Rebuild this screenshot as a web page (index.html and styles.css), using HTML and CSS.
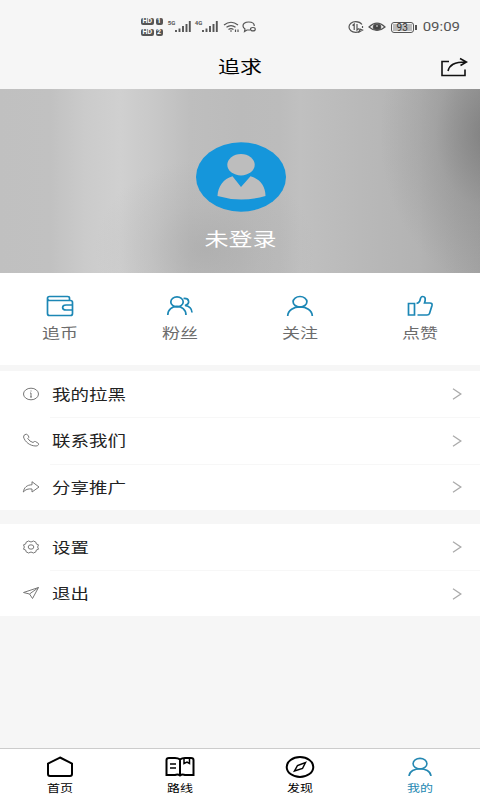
FILE: index.html
```html
<!DOCTYPE html>
<html lang="zh-CN">
<head>
<meta charset="utf-8">
<title>追求</title>
<link rel="stylesheet" href="styles.css">
</head>
<body>
<div class="status">
  <div class="hd"><div><b>HD</b><b>1</b></div><div><b>HD</b><b>2</b></div></div>
  <div class="sig"><i>5G</i><svg width="16" height="12" viewBox="0 0 16 12"><path d="M1 9v2M4.500 7.500v3.500M8 5v6M11.500 3v8M14.800 0v11"/></svg></div>
  <div class="sig second"><i>4G</i><svg width="16" height="12" viewBox="0 0 16 12"><path d="M1 9v2M4.500 7.500v3.500M8 5v6M11.500 3v8M14.800 0v11"/></svg></div>
  <svg class="wifi" width="18" height="12" viewBox="0 0 18 12"><path d="M1 4Q8 -1.500 15 4M3.500 6.300Q8 2.800 12.500 6.300M5.500 8.500Q8 6.800 10.500 8.500"/><path d="M7 10h2M12.500 8.500v2.500M15 8.500v2.500"/></svg>
  <svg class="bubble" width="16" height="12" viewBox="0 0 16 12"><path d="M8 9H5L2.500 10.500 3 8Q1 6.500 1 5C1 2.500 3.500 1 6.700 1s5.600 1.500 5.600 4"/><path d="M8.500 8.200c0-1.200 1.200-1.700 2.400-1.700s2.400.6 2.400 1.700-1.200 1.700-2.400 1.700-2.400-.6-2.400-1.700"/></svg>
  <svg class="sync" width="16" height="12" viewBox="0 0 16 12"><path d="M14 3.500C12.500 1.500 10.500.7 7.700.7 3.800.7 1 3 1 6s2.800 5.300 6.500 5.300c1.500 0 2.800-.2 4-.8M14.500 5v2"/><path d="M6.200 9V3L4.500 4.500M9 3v6l2-1.500M11 11l1-3 2.500 1z"/></svg>
  <svg class="eye" width="18" height="12" viewBox="0 0 18 12"><path d="M1 6Q9-2 17 6 9 13 1 6z"/><ellipse cx="9" cy="6" rx="3.700" ry="3" fill="#444"/><path d="M8 5h2" stroke="#ddd"/></svg>
  <div class="battery"><span>93</span></div>
  <div class="time"><span>09:09</span></div>
</div>
<header class="header">
  <h1 class="sq">追求</h1>
  <svg class="share" width="28" height="20" viewBox="0 0 28 20"><path d="M9 4.500H2V18.500H25V12.500M8 14C9.500 8 14 5 26 5M20 1.500 26.500 5 20.500 8.500"/></svg>
</header>
<section class="hero">
  <svg width="90" height="70" viewBox="0 0 90 70"><ellipse cx="45" cy="35" rx="45" ry="34.700" fill="#1596db"/><g fill="#bdbdbd"><ellipse cx="45" cy="22.800" rx="13.700" ry="10.700"/><path d="M36.500 34.200 45 45 54.500 34.200C64 37 69.500 44 69.500 54Q45 61 21.500 54C22 44 27.500 37 36.500 34.200z"/></g></svg>
  <div class="name sq">未登录</div>
</section>
<section class="stats">
  <div><svg width="28" height="22" viewBox="0 0 28 22"><path d="M23.500 5.500V3Q23.500 1.500 21.500 1.500H3.500Q1.500 1.500 1.500 3.500T3.500 5.500H24.500Q26.500 5.500 26.500 7.500V18.500Q26.500 20.500 24.500 20.500H3.500Q1.500 20.500 1.500 18.500V3.500M26.500 10H20C15.500 10 15.500 15 20 15H26.500"/></svg><span class="sq">追币</span></div>
  <div><svg width="28" height="22" viewBox="0 0 28 22"><ellipse cx="11" cy="6.900" rx="6.200" ry="5"/><path d="M1.800 20C1.800 8.500 20 8.500 20 20M17.500 3.500C23.500 3 24.500 8.500 19 10.500 23 11 25.800 13.500 26 17.500"/></svg><span class="sq">粉丝</span></div>
  <div><svg width="28" height="22" viewBox="0 0 28 22"><ellipse cx="14" cy="6.800" rx="6.900" ry="5.300"/><path d="M1.700 21C2 8.900 26 8.900 26.300 21"/></svg><span class="sq">关注</span></div>
  <div><svg width="28" height="22" viewBox="0 0 28 22"><path d="M2.500 8.500H8.500V20H2.500zM11.500 20H21Q23 20 23.500 18.500L26 10.500Q26.500 8 24 8H18.500C19.500 5 20 1.500 16.500 1.500 14 1.500 14.500 5 13.500 6.500Q12.500 8 10.500 8.500"/></svg><span class="sq">点赞</span></div>
</section>
<section class="group">
  <div class="row"><svg class="ico" width="18" height="16" viewBox="0 0 18 16"><ellipse cx="9" cy="8" rx="7.500" ry="5.800"/><path d="M9 7v4M9 4.500v1M8 7h1M8 11h2"/></svg><div class="cell"><span class="sq">我的拉黑</span><svg class="arrow" width="10" height="12" viewBox="0 0 10 12"><path d="M1 .8 8.800 6 1 11.200"/></svg></div></div>
  <div class="row"><svg class="ico" width="18" height="16" viewBox="0 0 18 16"><path d="M4.500 2Q1.500 2.500 1.500 5C3 10 8 14 14 14 16 14 17 12.500 16.500 11.500L13.500 9.500Q12.500 9 11 10.500 7.500 9.500 5.800 6.500 7.500 5.500 6.500 4z"/></svg><div class="cell"><span class="sq">联系我们</span><svg class="arrow" width="10" height="12" viewBox="0 0 10 12"><path d="M1 .8 8.800 6 1 11.200"/></svg></div></div>
  <div class="row"><svg class="ico" width="18" height="16" viewBox="0 0 18 16"><path d="M10 2.700 17 8 10 13V10C6 9.500 3.500 10.500 1.300 13 2 8.500 5 5.800 10 5.800z"/></svg><div class="cell"><span class="sq">分享推广</span><svg class="arrow" width="10" height="12" viewBox="0 0 10 12"><path d="M1 .8 8.800 6 1 11.200"/></svg></div></div>
</section>
<section class="group two">
  <div class="row"><svg class="ico" width="18" height="16" viewBox="0 0 18 16"><path d="M6.500 2Q9 4 11.500 2L14 3.300Q13.300 5.300 16.500 5.800 14.800 8 16.500 10.200 13.300 10.700 14 12.700L11.500 14Q9 12 6.500 14L4 12.700Q4.700 10.700 1.500 10.200 3.200 8 1.500 5.800 4.700 5.300 4 3.300z"/><ellipse cx="9" cy="8" rx="2.800" ry="2.200"/></svg><div class="cell"><span class="sq">设置</span><svg class="arrow" width="10" height="12" viewBox="0 0 10 12"><path d="M1 .8 8.800 6 1 11.200"/></svg></div></div>
  <div class="row"><svg class="ico" width="18" height="16" viewBox="0 0 18 16"><path d="M1.500 7.500 16.500 2.500 10.500 13.500 7.500 9zM7.500 9 16.500 2.500"/></svg><div class="cell"><span class="sq">退出</span><svg class="arrow" width="10" height="12" viewBox="0 0 10 12"><path d="M1 .8 8.800 6 1 11.200"/></svg></div></div>
</section>
<nav class="tabs">
  <div><svg width="30" height="24" viewBox="0 0 30 24"><path d="M15 2.500 27 8.500V19Q27 21 25 21H5Q3 21 3 19V8.500z"/></svg><span class="sq">首页</span></div>
  <div><svg width="30" height="24" viewBox="0 0 30 24"><path d="M15 4.500Q13 3 10 3H4Q1.500 3 1.500 5V20H10Q13 19 15 20.500 17 19 20 20H28.500V5Q28.500 3 26 3H20Q17 3 15 4.500V20.500"/><path d="M5 9h6M5 13h6M19 4v4.500l3-1.500 2.500 1.500V4" stroke-width="1.500"/></svg><span class="sq">路线</span></div>
  <div><svg width="30" height="24" viewBox="0 0 30 24"><ellipse cx="15" cy="12" rx="13.300" ry="10"/><path d="M20.500 7.500 17.500 13.500 9.500 16 12.500 10.500z" stroke-width="1.500"/></svg><span class="sq">发现</span></div>
  <div class="on"><svg width="30" height="24" viewBox="0 0 30 24"><ellipse cx="15" cy="8.700" rx="6.900" ry="5.300"/><path d="M4 21C5 11.300 25 11.300 26 21"/></svg><span class="sq">我的</span></div>
</nav>
</body>
</html>
```
FILE: styles.css
```css
* { box-sizing: border-box; }
body {
  margin: 0;
  width: 480px;
  height: 800px;
  display: flex;
  flex-direction: column;
  overflow: hidden;
  background: #f6f6f6;
  color: #222;
  font-family: Roboto, "Noto Sans CJK SC", sans-serif;
}
svg { display: block; flex: none; fill: none; stroke: currentColor; }
/* wide, low letterforms */
.sq { display: block; transform: scaleY(.78); white-space: nowrap; }

.status {
  height: 53px;
  padding: 1px 20px 0 141px;
  display: flex;
  align-items: center;
  color: #555;
  flex: none;
}
.status svg { stroke-width: 1.2; }
.hd { width: 22px; display: grid; gap: 4px; }
.hd div { display: flex; gap: 2px; }
.hd b {
  height: 7px;
  padding: 0 1.5px;
  border-radius: 2px;
  background: #555;
  color: #fff;
  font-size: 7px;
  line-height: 7px;
}
.sig { display: flex; margin-left: 5px; }
.sig svg { stroke-width: 1.9; }
.sig.second { margin-left: 4px; }
.sig i { width: 7px; font: bold 6px/6px Roboto, sans-serif; white-space: nowrap; margin-top: -1px; }
.wifi { margin-left: 5px; }
.bubble { margin-left: 1px; }
.sync { margin-left: 90px; }
.eye { margin-left: 4px; }
.battery {
  position: relative;
  margin-left: 5px;
  width: 23px;
  height: 11px;
  border: 1px solid #555;
  border-radius: 3px;
  padding: 1px;
}
.battery span {
  display: block;
  height: 7px;
  background: #bbb;
  color: #333;
  font-size: 10px;
  line-height: 7px;
  text-align: center;
}
.battery::after {
  content: "";
  position: absolute;
  left: 23px;
  top: 2px;
  width: 2px;
  height: 5px;
  background: #555;
}
.time { margin-left: 9px; font-size: 15px; white-space: nowrap; }
.time span { display: block; transform: scaleY(.87); }

.header {
  height: 36px;
  flex: none;
  display: grid;
  grid-template-columns: 1fr auto 1fr;
  align-items: center;
  padding: 0 12px;
}
.header h1 {
  grid-column: 2;
  margin: -7px 0 0;
  font-size: 22px;
  line-height: 30px;
  font-weight: 400;
  color: #000;
}
.share { justify-self: end; margin-top: -8px; color: #111; stroke-width: 1.6; }

.hero {
  height: 184px;
  flex: none;
  display: flex;
  flex-direction: column;
  align-items: center;
  padding: 53px 0 0 1px;
  background:
    radial-gradient(ellipse 110px 150px at 490px 45px, rgba(105,105,105,.6), rgba(125,125,125,.25) 50%, rgba(130,130,130,0)),
    radial-gradient(ellipse 110px 90px at 205px 160px, rgba(160,160,160,.45), rgba(165,165,165,.2) 50%, rgba(170,170,170,0)),
    linear-gradient(90deg, #c0c0c0 0, #c1c1c1 50px, #cbcbcb 85px, #d0d0d0 120px, #c8c8c8 155px, #bebebe 190px, #bbb 240px, #bcbcbc 280px, #c0c0c0 300px, #b9b9b9 360px, #b3b3b3 420px, #a3a3a3 480px);
}
.hero svg { stroke: none; }
.name { margin-top: 11px; font-size: 24px; line-height: 34px; color: #fff; }

.stats {
  height: 92px;
  flex: none;
  display: grid;
  grid-template-columns: repeat(4, 1fr);
  background: #fff;
}
.stats div { display: flex; flex-direction: column; align-items: center; padding-top: 22px; }
.stats svg { color: #1c87b5; stroke-width: 1.7; }
.stats .sq { margin-top: 3px; font-size: 18px; line-height: 26px; color: #6c6c6c; }

.group { margin-top: 6px; height: 139px; flex: none; background: #fff; display: flex; flex-direction: column; }
.group.two { margin-top: 14px; height: 92px; }
.row { flex: 1; display: flex; padding-left: 22px; align-items: center; }
.ico { color: #777; }
.cell {
  flex: 1;
  align-self: stretch;
  margin-left: 10px;
  padding: 0 18px 0 2px;
  display: flex;
  align-items: center;
  justify-content: space-between;
}
.row + .row .cell { border-top: 1px solid #f7f7f7; }
.cell .sq { margin-top: 1px; font-size: 18.500px; line-height: 28px; }
.arrow { color: #aaa; stroke-width: 1.3; }

.tabs {
  margin-top: auto;
  height: 52px;
  flex: none;
  border-top: 1px solid #ccc;
  background: #fff;
  display: grid;
  grid-template-columns: repeat(4, 1fr);
  color: #000;
}
.tabs div { display: flex; flex-direction: column; align-items: center; padding-top: 6px; }
.tabs svg { stroke-width: 2; }
.tabs .sq { margin-top: 1px; font-size: 13px; line-height: 18px; font-weight: 400; }
.tabs .on { color: #2588b2; }
.tabs .on svg { stroke-width: 1.6; }
```
